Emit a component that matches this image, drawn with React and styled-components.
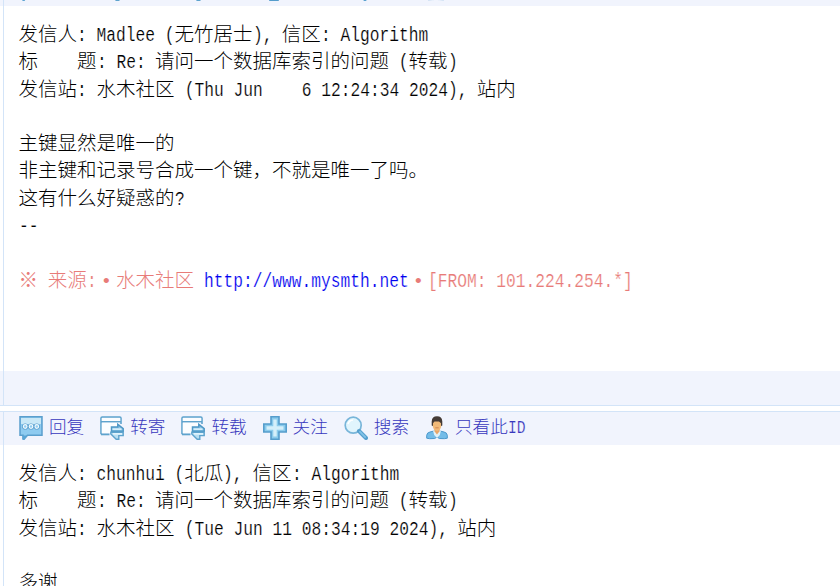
import React from "react";
import styled, { createGlobalStyle } from "styled-components";

const GlobalStyle = createGlobalStyle`
  html, body { margin: 0; padding: 0; background: #fff; overflow: hidden; }
`;

const Page = styled.main`
  height: 586px;
  overflow: hidden;
  background: #fff;
  color: #000;
  font-family: "Noto Sans CJK SC", sans-serif;
  font-weight: 300;
`;

const Thread = styled.div`
  display: flex;
  flex-direction: column;
  gap: 5px;
  margin-top: -28px;
`;

const Post = styled.article`
  border-top: 1px solid #d3e4f8;
  border-bottom: 1px solid #d3e4f8;
`;

const Band = styled.div`
  display: flex;
  background: ${(p) => (p.$tinted ? "#f1f4fd" : "#fff")};
  height: ${(p) => p.$height}px;

  &::before {
    content: "";
    flex: 0 0 3px;
    border-right: 1px solid #d3e4f8;
  }
`;

const Toolbar = styled.nav`
  display: flex;
  gap: 16px;
  padding: 4px 0 0 15px;
`;

const Action = styled.a`
  display: flex;
  gap: 6px;
  min-width: 65px;
  height: 24px;
  font-size: 17.6px;
  line-height: 20px;
  color: #3737bd;
  white-space: pre;

  svg { display: block; flex: none; }
`;

const Content = styled.div`
  padding: 13px 0 0 14.5px;
  font-size: 19.5px;
`;

const Line = styled.div`
  height: 27.3px;
  line-height: 27.3px;
  white-space: pre;
  color: ${(p) => (p.$quiet ? "#e87b78" : "inherit")};
`;

const Half = styled.span`
  display: inline-block;
  font-family: "Liberation Mono", monospace;
  line-height: 1;
  transform: scaleX(0.8332);
  transform-origin: left;
  margin-right: ${(p) => -0.1001 * p.$count}em;
  -webkit-text-stroke: 0.2px #fff;
`;

const Dot = styled.span`
  display: inline-block;
  width: 19.5px;
  text-align: center;
  font-family: "Liberation Sans", sans-serif;
  font-size: 19px;
  line-height: 1;
`;

const Link = styled.a`
  color: #0000f0;
`;

// Latin runs take exactly half an em per character.
function Mono({ children }) {
  return children.split(/([\x20-\x7e]+)/).map((run, i) =>
    i % 2 ? <Half key={i} $count={run.length}>{run}</Half> : run
  );
}

const ReplyIcon = () => (
  <svg width="24" height="24" viewBox="0 0 24 24">
    <path d="M1 .8h22v18.4H8.5L5 23.3l-1-.3v-3.8H1z" fill="#8ecbf0" stroke="#5b9fcd" strokeWidth="1.5" />
    <path d="M2 2h20v6H2z" fill="#c9e8f7" />
    <g fill="#8ecbf0" stroke="#579ccb" strokeWidth="2.6">
      <circle cx="6.2" cy="10.5" r="1.8" /><circle cx="12" cy="10.5" r="1.8" /><circle cx="17.8" cy="10.5" r="1.8" />
    </g>
    <g fill="#8ecbf0" stroke="#f2fbff" strokeWidth="1.2">
      <circle cx="6.2" cy="10.5" r="1.8" /><circle cx="12" cy="10.5" r="1.8" /><circle cx="17.8" cy="10.5" r="1.8" />
    </g>
    <path d="M3.4 19.4h5L5.2 23.4H3.6z" fill="#5aa5d5" />
  </svg>
);

const ForwardIcon = () => (
  <svg width="24" height="24" viewBox="0 0 24 24">
    <path d="M1 18.3V2.2Q1 1 2.2 1h17.6Q21 1 21 2.2V8" fill="none" stroke="#5ea3cd" strokeWidth="1.6" />
    <path d="M1.8 1.9h18.4v3H1.8zM1.8 6.8h17V17h-17z" fill="#fbfdff" />
    <path d="M1 5.7h20" stroke="#5ea3cd" strokeWidth="1.4" />
    <path d="M1 18.4h8.5" stroke="#5ea3cd" strokeWidth="1.8" />
    <path d="M11.5 11h6.3V8.3l5.4 4.3v2.6H11.5z" fill="#8ec8e8" stroke="#4f98c6" strokeWidth="1.5" />
    <path d="M23.2 16.2v3.4h-4.4v3.6h-2.6L10.8 18v-1.8z" fill="#b9dff2" stroke="#5ea3cd" strokeWidth="1.4" />
    <path d="M12.5 13.2h9M13 17.8h9" stroke="#eefaff" strokeWidth="1.3" />
  </svg>
);

const FollowIcon = () => (
  <svg width="24" height="24" viewBox="0 0 24 24">
    <path d="M8 .8h8V8h7.2v8H16v7.2H8V16H.8V8H8z" fill="#8bcbec" stroke="#559dcc" strokeWidth="1.6" />
    <path d="M12 3.5v17M3.5 12h17" stroke="#d5effa" strokeWidth="3.4" />
  </svg>
);

const SearchIcon = () => (
  <svg width="24" height="24" viewBox="0 0 24 24">
    <circle cx="9.2" cy="9.2" r="8" fill="#e1f5fd" stroke="#78b5d9" strokeWidth="1.7" />
    <path d="m15 15 7 7" stroke="#559fce" strokeWidth="4" strokeLinecap="round" />
    <path d="m15.4 15.2 6.3 6.5" stroke="#82c3e8" strokeWidth="1.8" />
    <path d="M4 8a5.5 5.5 0 0 1 5-4" fill="none" stroke="#fff" strokeWidth="1.6" />
  </svg>
);

const AuthorIcon = () => (
  <svg width="24" height="24" viewBox="0 0 24 24">
    <path d="M1.7 22.2v-2.9Q2 16.5 5 16l4-1h6l4 1q3 .5 3.3 3.3v2.9q-2 .8-8 .3L12 21l-2.3 1.5q-6 .5-8-.3z" fill="#73bce8" stroke="#4c98cc" strokeWidth="1" />
    <path d="M8 14.5h8l-1.2 4.5L12 22l-2.8-3z" fill="#dff0f8" />
    <path d="M9.6 13h4.8v2.6L12 18.5l-2.4-2.9z" fill="#e9a568" />
    <ellipse cx="12" cy="9" rx="4.4" ry="6" fill="#f0b978" />
    <path d="M6.7 9.5V5.4Q7 .3 12 .3t5.3 5.1v4.1L16 10V7.2L14 5.5H9.5L8 7.2V10z" fill="#443b36" />
    <path d="M10.3 11.8h3.4" stroke="#c97949" strokeWidth=".8" />
  </svg>
);

const actions = [
  ["回复", ReplyIcon],
  ["转寄", ForwardIcon],
  ["转载", ForwardIcon],
  ["关注", FollowIcon],
  ["搜索", SearchIcon],
  ["只看此ID", AuthorIcon],
];

function PostHeader({ labelled = true }) {
  return (
    <Band $tinted $height={33}>
      <Toolbar>
        {actions.map(([label, Icon]) => (
          <Action key={label} aria-label={label}>
            <Icon />
            {labelled && <span><Mono>{label}</Mono></span>}
          </Action>
        ))}
      </Toolbar>
    </Band>
  );
}

const firstPost = [
  "发信人: Madlee (无竹居士), 信区: Algorithm",
  "标    题: Re: 请问一个数据库索引的问题 (转载)",
  "发信站: 水木社区 (Thu Jun    6 12:24:34 2024), 站内",
  "",
  "主键显然是唯一的",
  "非主键和记录号合成一个键，不就是唯一了吗。",
  "这有什么好疑惑的?",
  "--",
  "",
];

const secondPost = [
  "发信人: chunhui (北瓜), 信区: Algorithm",
  "标    题: Re: 请问一个数据库索引的问题 (转载)",
  "发信站: 水木社区 (Tue Jun 11 08:34:19 2024), 站内",
  "",
  "多谢",
];

function Lines({ items }) {
  return items.map((text, i) => <Line key={i}><Mono>{text}</Mono></Line>);
}

export default function App() {
  return (
    <Page>
      <GlobalStyle />
      <Thread>
        <Post>
          <PostHeader labelled={false} />
          <Band $height={365}>
            <Content>
              <Lines items={firstPost} />
              <Line $quiet>
                <Mono>※ 来源:</Mono><Dot>•</Dot><Mono>水木社区 </Mono>
                <Link><Mono>http://www.mysmth.net</Mono></Link>
                <Dot>•</Dot><Mono>[FROM: 101.224.254.*]</Mono>
              </Line>
            </Content>
          </Band>
          <Band $tinted $height={34} />
        </Post>
        <Post>
          <PostHeader />
          <Band $height={365}>
            <Content><Lines items={secondPost} /></Content>
          </Band>
        </Post>
      </Thread>
    </Page>
  );
}
